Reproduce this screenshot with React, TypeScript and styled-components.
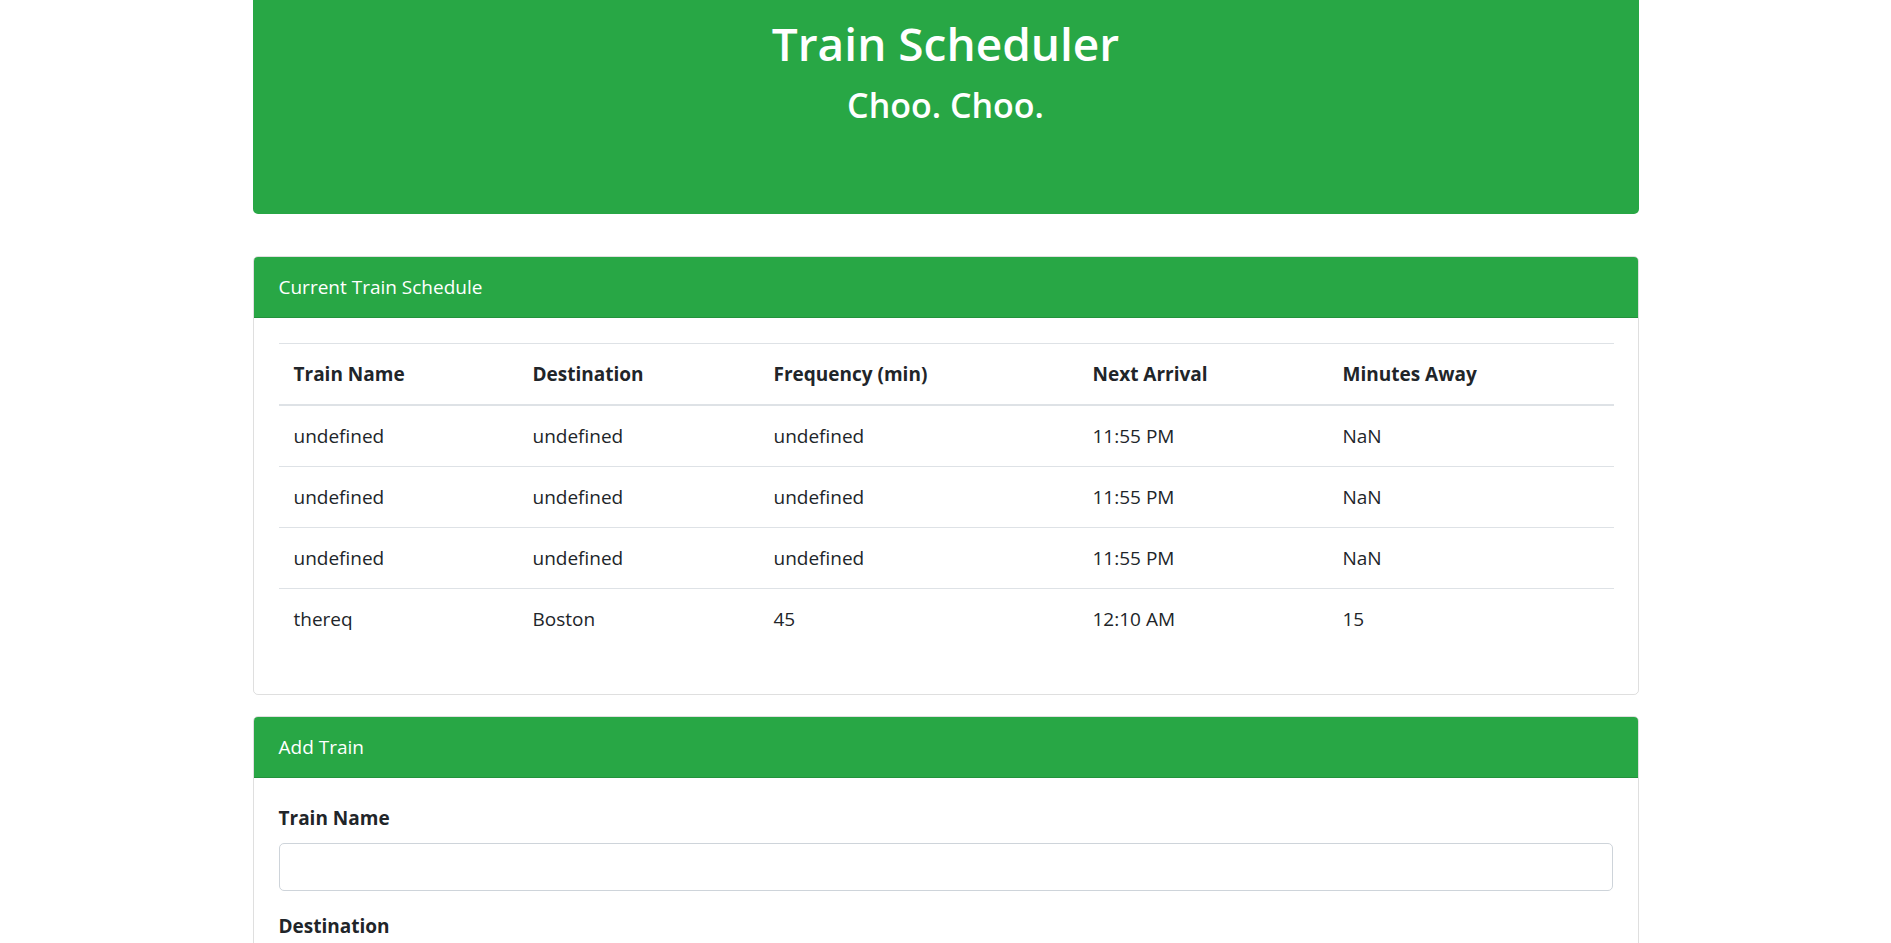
import React from 'react';
import styled, { createGlobalStyle } from 'styled-components';

const GlobalStyle = createGlobalStyle`
  * { box-sizing: border-box; }
  body {
    margin: 0;
    background: #fff;
    color: #212529;
    font-family: 'Open Sans', 'Noto Sans', sans-serif;
    font-size: 19px;
    line-height: 30px;
  }
`;

const green = '#28a745';

const Container = styled.div`
  width: 1386px;
  margin: 0 auto;
`;

const Jumbotron = styled.header`
  background: ${green};
  color: #fff;
  text-align: center;
  padding: 16px 40px 89px;
  border-radius: 0 0 5px 5px;
  margin-bottom: 42px;
`;

const Title = styled.h1`
  margin: 0;
  font-size: 46px;
  font-weight: 600;
  line-height: 55px;
`;

const Subtitle = styled.h3`
  margin: 14px 0 0;
  font-size: 34px;
  font-weight: 600;
  line-height: 40px;
`;

const Card = styled.section`
  border: 1px solid rgba(0, 0, 0, 0.125);
  border-radius: 5px;
  margin-bottom: 21px;
  overflow: hidden;
`;

const CardHeader = styled.div`
  background: ${green};
  color: #fff;
  padding: 15px 25px;
  border-bottom: 1px solid rgba(0, 0, 0, 0.125);
`;

const CardBody = styled.div`
  padding: 25px;
`;

const Table = styled.table`
  width: 100%;
  border-collapse: collapse;
  margin-bottom: 20px;
  table-layout: fixed;
`;

const Th = styled.th<{ $w: number }>`
  width: ${p => p.$w}px;
  text-align: left;
  font-weight: 700;
  padding: 15px;
  border-top: 1px solid #dee2e6;
  border-bottom: 2px solid #dee2e6;
`;

const Td = styled.td`
  padding: 15px;
  border-top: 1px solid #dee2e6;
`;

const FormGroup = styled.div`
  margin-bottom: 20px;
`;

const Label = styled.label`
  display: block;
  font-weight: 700;
  margin-bottom: 10px;
`;

const Input = styled.input`
  display: block;
  width: 100%;
  height: 47.5px;
  padding: 7.5px 15px;
  font: inherit;
  color: #495057;
  border: 1px solid #ced4da;
  border-radius: 5px;
  background: #fff;
`;

const SubmitButton = styled.button`
  font: inherit;
  color: #fff;
  background: ${green};
  border: 1px solid ${green};
  border-radius: 5px;
  padding: 7.5px 15px;
`;

const columns = [
  { label: 'Train Name', w: 239 },
  { label: 'Destination', w: 241 },
  { label: 'Frequency (min)', w: 319 },
  { label: 'Next Arrival', w: 250 },
  { label: 'Minutes Away', w: 286 },
];

const trains = [
  ['undefined', 'undefined', 'undefined', '11:55 PM', 'NaN'],
  ['undefined', 'undefined', 'undefined', '11:55 PM', 'NaN'],
  ['undefined', 'undefined', 'undefined', '11:55 PM', 'NaN'],
  ['thereq', 'Boston', '45', '12:10 AM', '15'],
];

const fields = ['Train Name', 'Destination', 'First Train Time (HH:mm - military time)', 'Frequency (min)'];

export default function App() {
  return (
    <>
      <GlobalStyle />
      <Container>
        <Jumbotron>
          <Title>Train Scheduler</Title>
          <Subtitle>Choo. Choo.</Subtitle>
        </Jumbotron>

        <Card>
          <CardHeader>Current Train Schedule</CardHeader>
          <CardBody>
            <Table>
              <thead>
                <tr>
                  {columns.map(c => (
                    <Th key={c.label} $w={c.w}>{c.label}</Th>
                  ))}
                </tr>
              </thead>
              <tbody>
                {trains.map((row, i) => (
                  <tr key={i}>
                    {row.map((cell, j) => (
                      <Td key={j}>{cell}</Td>
                    ))}
                  </tr>
                ))}
              </tbody>
            </Table>
          </CardBody>
        </Card>

        <Card>
          <CardHeader>Add Train</CardHeader>
          <CardBody>
            {fields.map(f => (
              <FormGroup key={f}>
                <Label>{f}</Label>
                <Input type="text" />
              </FormGroup>
            ))}
            <SubmitButton type="submit">Submit</SubmitButton>
          </CardBody>
        </Card>
      </Container>
    </>
  );
}
